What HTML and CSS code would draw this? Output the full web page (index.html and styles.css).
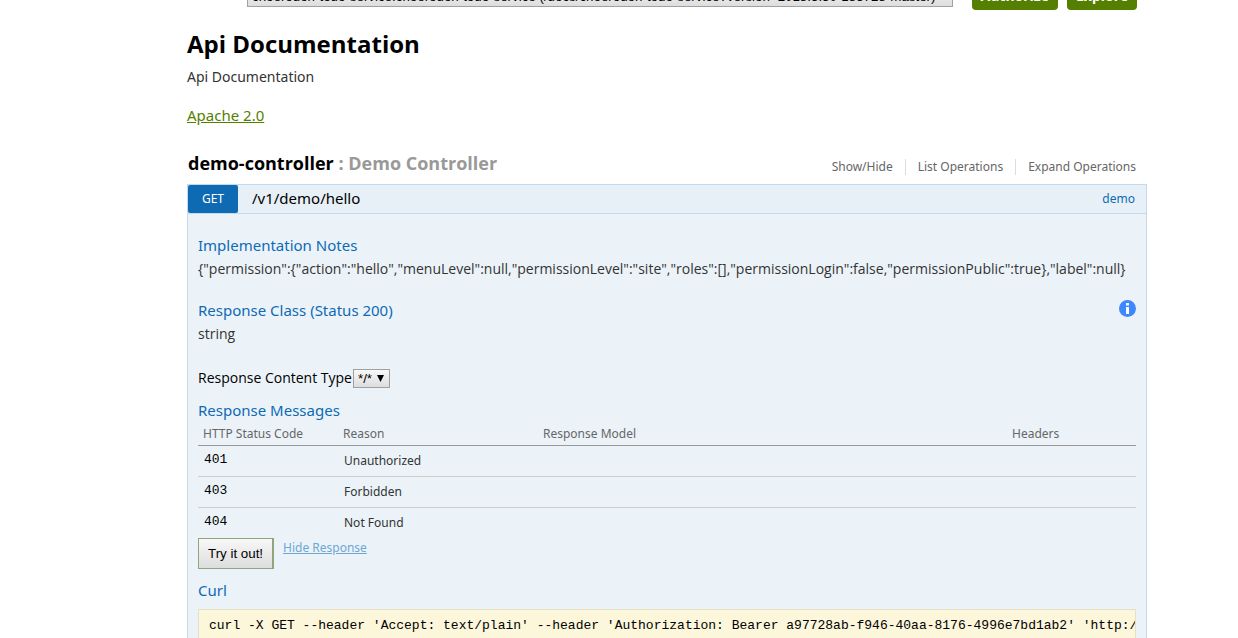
FILE: index.html
```html
<!DOCTYPE html>
<html lang="en">
<head>
<meta charset="utf-8">
<title>Api Documentation</title>
<link rel="stylesheet" href="styles.css">
</head>
<body>
<div class="page">
  <header class="topbar">
    <select class="service-select" aria-label="Service">
      <option>choerodon-todo-service:choerodon-todo-service (/docs/choerodon-todo-service?version=2018.3.30-183728-master)</option>
    </select>
    <button class="top-button" type="button">Authorize</button>
    <button class="top-button" type="button">Explore</button>
  </header>
  <main>
    <section class="info">
      <h1 class="info-title">Api Documentation</h1>
      <p class="info-description">Api Documentation</p>
      <a class="info-license" href="#license">Apache 2.0</a>
    </section>
    <section class="resource">
      <div class="resource-heading">
        <h2 class="resource-title">demo-controller <span class="resource-subtitle">: Demo Controller</span></h2>
        <nav class="options">
          <a class="option" href="#toggle">Show/Hide</a>
          <a class="option" href="#list">List Operations</a>
          <a class="option" href="#expand">Expand Operations</a>
        </nav>
      </div>
      <article class="operation">
        <div class="operation-heading">
          <a class="method" href="#get">GET</a>
          <a class="path" href="#hello">/v1/demo/hello</a>
          <a class="tag" href="#demo">demo</a>
        </div>
        <div class="content">
          <h4 class="label">Implementation Notes</h4>
          <p class="notes">{"permission":{"action":"hello","menuLevel":null,"permissionLevel":"site","roles":[],"permissionLogin":false,"permissionPublic":true},"label":null}</p>
          <div class="class-row">
            <h4 class="label">Response Class (Status 200)</h4>
            <button class="info-button" type="button" aria-label="Access information">
              <svg class="info-icon" viewBox="0 0 17 17"><circle cx="8.500" cy="8.500" r="8.500" fill="#3f87fc"/><path fill="#fff" d="M7 3h3v2.500H7zM7 7h3v7H7z"/></svg>
            </button>
          </div>
          <p class="notes">string</p>
          <div class="content-type">
            <label for="content-type">Response Content Type</label>
            <span class="type-wrap">
              <select class="type-select" id="content-type"><option>*/*</option></select>
              <svg class="arrow" viewBox="0 0 7 7"><path d="M0 0h7L3.500 7z"/></svg>
            </span>
          </div>
          <h4 class="label">Response Messages</h4>
          <table class="messages">
            <thead><tr><th class="col-code">HTTP Status Code</th><th class="col-reason">Reason</th><th class="col-model">Response Model</th><th class="col-headers">Headers</th></tr></thead>
            <tbody>
              <tr><td class="code">401</td><td>Unauthorized</td><td></td><td></td></tr>
              <tr><td class="code">403</td><td>Forbidden</td><td></td><td></td></tr>
              <tr><td class="code">404</td><td>Not Found</td><td></td><td></td></tr>
            </tbody>
          </table>
          <div class="submit-row">
            <button class="submit" type="button">Try it out!</button>
            <a class="hide-response" href="#hide">Hide Response</a>
          </div>
          <h4 class="label">Curl</h4>
          <pre class="curl">curl -X GET --header 'Accept: text/plain' --header 'Authorization: Bearer a97728ab-f946-40aa-8176-4996e7bd1ab2' 'http://</pre>
        </div>
      </article>
    </section>
  </main>
</div>
</body>
</html>
```
FILE: styles.css
```css
* { box-sizing: border-box; }
html { overflow: hidden; }
body {
  margin: 0;
  background: #fff;
  color: #000;
  font-family: "Noto Sans", "Open Sans", sans-serif;
}
h1, h2, h4, p, pre { margin: 0; }
a { text-decoration: none; }
.page { padding: 0 91px 0 187px; }

.topbar {
  display: flex;
  align-items: flex-end;
  height: 10px;
  padding: 0 10px 0 60px;
}
.service-select, .type-select {
  appearance: none;
  border: 1px solid #a0a0a0;
  border-radius: 0;
  background: linear-gradient(#f8f8f8, #dddddd);
  color: #000;
  font-family: "Liberation Sans", Arial, sans-serif;
}
.service-select {
  flex: 1;
  min-width: 0;
  height: 21px;
  margin: 0 10px 3px 0;
  padding: 0 4px;
}
.top-button {
  flex: none;
  height: 28px;
  margin-left: 9px;
  padding: 0 9px;
  border: 0;
  border-radius: 4px;
  background: #547f00;
  color: #fff;
  font-family: inherit;
  font-size: 14px;
  font-weight: 700;
  line-height: 26px;
}

.info { padding-top: 17px; }
.info-title { font-family: "Open Sans", sans-serif; font-size: 24px; line-height: 34px; }
.info-description { padding-top: 6px; color: #333; font-size: 14px; line-height: 20px; }
.info-license {
  display: inline-block;
  margin-top: 17px;
  color: #547f00;
  font-size: 15px;
  line-height: 22px;
  text-decoration: underline;
}

.resource-heading {
  display: flex;
  justify-content: space-between;
  align-items: flex-end;
  padding: 23px 11px 7px 1px;
}
.resource-title { font-family: "Open Sans", sans-serif; font-size: 18px; line-height: 28px; }
.resource-subtitle { color: #999; }
.options { display: flex; padding-bottom: 2px; }
.option {
  padding: 0 12px;
  border-left: 1px solid #ddd;
  color: #666;
  font-size: 12px;
  line-height: 16px;
}
.option:first-child { border-left: 0; }
.option:last-child { padding-right: 0; }

.operation { border: 1px solid #c3d9ec; }
.operation-heading {
  display: flex;
  align-items: center;
  height: 29px;
  padding-right: 11px;
  border-bottom: 1px solid #c3d9ec;
  background: #e7f0f7;
}
.method {
  width: 50px;
  border-radius: 2px;
  background: #0f6ab4;
  color: #fff;
  font-size: 12px;
  line-height: 28px;
  text-align: center;
}
.path { flex: 1; padding: 0 0 2px 14px; color: #000; font-size: 15px; line-height: 26px; }
.tag { color: #0f6ab4; font-size: 12px; line-height: 26px; }

.content { padding: 21px 10px 10px; background: #ebf3f9; }
.label { padding-bottom: 2px; color: #0f6ab4; font-size: 15px; font-weight: 400; line-height: 20px; }
.notes { color: #333; font-family: "Open Sans", sans-serif; font-size: 14px; line-height: 24px; white-space: nowrap; }
.class-row { display: flex; justify-content: space-between; padding-top: 19px; }
.info-button { width: 17px; height: 17px; padding: 0; border: 0; background: none; }
.info-icon { display: block; width: 17px; height: 17px; }
.content-type {
  display: flex;
  align-items: center;
  gap: 1px;
  padding: 20px 0 10px;
  font-family: "Open Sans", sans-serif;
  font-size: 14px;
  line-height: 24px;
}
.type-wrap { position: relative; display: flex; }
.type-select { width: 37px; height: 19px; padding: 0 4px; }
.arrow { position: absolute; top: 6px; right: 6px; width: 7px; height: 7px; pointer-events: none; }

.messages { width: 100%; border-collapse: collapse; table-layout: fixed; color: #333; font-size: 12px; }
.messages th {
  padding: 0 5px;
  border-bottom: 1px solid #999;
  color: #666;
  font-weight: 400;
  line-height: 23px;
  text-align: left;
}
.messages td { height: 31px; padding: 0 6px; line-height: 18px; }
.messages tr + tr td { border-top: 1px solid #ccc; }
.messages tr:last-child td { height: 30px; }
.col-code { width: 140px; }
.col-reason { width: 200px; }
.col-model { width: 50%; }
.messages .code { padding-bottom: 2px; color: #000; font-family: "Liberation Mono", monospace; font-size: 13px; }

.submit-row { display: flex; align-items: flex-start; gap: 9px; padding-bottom: 11px; }
.submit {
  height: 31px;
  padding: 0 9px;
  border: 1px solid #8fa67c;
  border-right-width: 2px;
  background: linear-gradient(#f8f8f8, #dddddd);
  color: #000;
  font-family: "Liberation Sans", Arial, sans-serif;
}
.hide-response { color: #6fa6d2; font-size: 12px; line-height: 19px; text-decoration: underline; }
.curl {
  overflow: hidden;
  margin-top: 7px;
  padding: 8px 10px;
  border: 1px solid #e5e0c6;
  background: #fcf6db;
  font-family: "Liberation Mono", monospace;
  font-size: 13px;
  line-height: 15px;
}
```
